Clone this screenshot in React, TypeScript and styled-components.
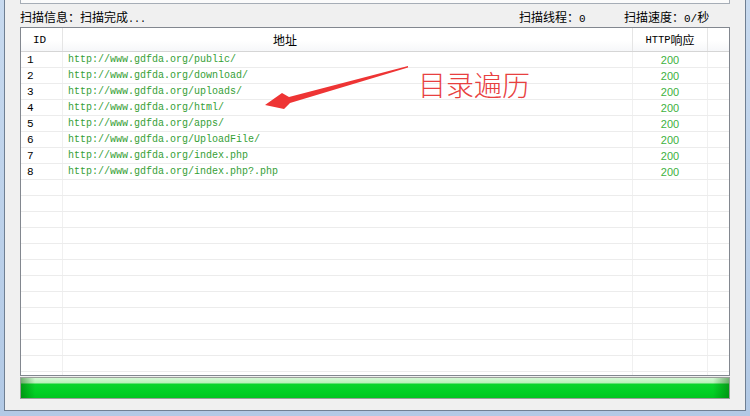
import React from "react";
import styled, { createGlobalStyle } from "styled-components";

const CJK = `"Noto Sans CJK SC", "Liberation Sans", sans-serif`;
const MONO = `"Liberation Mono", "DejaVu Sans Mono", monospace`;

const Global = createGlobalStyle`
  html, body { margin: 0; padding: 0; background: #b9cfe8; }
  #root { width: 750px; height: 416px; overflow: hidden; }
`;

const Frame = styled.div`
  position: relative;
  width: 750px;
  height: 416px;
  box-sizing: border-box;
  padding: 0 4px 5px 4px;
  background: linear-gradient(to bottom, #c8daef, #b2c9e5);
  display: flex;
`;

const Panel = styled.div`
  flex: 1;
  display: flex;
  flex-direction: column;
  background: #f0f0f0;
  border: 1px solid #6f7f92;
  border-top: none;
  padding: 0 15px;
`;

const TopBox = styled.div`
  height: 3px;
  border: 1px solid #a6adb6;
  border-top: none;
  background: #fbfbfb;
`;

const StatusRow = styled.div`
  height: 23px;
  box-sizing: border-box;
  padding-top: 2px;
  display: flex;
  align-items: center;
  font-family: ${CJK};
  font-size: 12px;
  color: #000;
  white-space: nowrap;
`;

const StatusMain = styled.div`
  flex: 1;
`;

const StatusItem = styled.div<{ $w: number }>`
  width: ${(p) => p.$w}px;
`;

const Ascii = styled.span<{ $size?: number }>`
  font-family: ${MONO};
  font-size: ${(p) => p.$size ?? 10}px;
`;

const ListBox = styled.div`
  height: 349px;
  box-sizing: border-box;
  border: 1px solid #82878f;
  background: #fff;
  overflow: hidden;
`;

const COLS = "42px 570px 75px 1fr";

const HeaderRow = styled.div`
  display: grid;
  grid-template-columns: ${COLS};
  height: 24px;
  box-sizing: border-box;
  border-bottom: 1px solid #d5d5d5;
  background: linear-gradient(to bottom, #ffffff 0%, #ffffff 55%, #f6f7f9 100%);
`;

const HeaderCell = styled.div<{ $align: "left" | "center"; $pad?: number }>`
  display: flex;
  align-items: center;
  justify-content: ${(p) => (p.$align === "center" ? "center" : "flex-start")};
  padding-left: ${(p) => p.$pad ?? 0}px;
  border-right: 1px solid #e5e5e5;
  font-family: ${CJK};
  font-size: 12px;
  color: #000;
  white-space: nowrap;
  &:last-child { border-right: none; }
`;

const Row = styled.div`
  display: grid;
  grid-template-columns: ${COLS};
  height: 16px;
  box-sizing: border-box;
  border-bottom: 1px solid #ececec;
`;

const Cell = styled.div<{ $kind: "id" | "url" | "code" | "fill" }>`
  display: flex;
  align-items: center;
  white-space: nowrap;
  overflow: hidden;
  border-right: 1px solid #f0f0f0;
  &:last-child { border-right: none; }
  ${(p) =>
    p.$kind === "id"
      ? `padding-left: 6px; font-family: ${MONO}; font-size: 11px; color: #000;`
      : p.$kind === "url"
      ? `padding-left: 5px; font-family: ${MONO}; font-size: 10px; color: #35a035;`
      : p.$kind === "code"
      ? `justify-content: center; font-family: "Liberation Sans", Arial, sans-serif; font-size: 11px; color: #40b240;`
      : ""}
`;

const Progress = styled.div`
  margin-top: 1px;
  height: 22px;
  box-sizing: border-box;
  border: 1px solid #9a9e9a;
  background:
    linear-gradient(to right, rgba(0, 90, 0, 0.45) 0px, rgba(0, 90, 0, 0) 14px, rgba(0, 90, 0, 0) calc(100% - 16px), rgba(0, 90, 0, 0.45) 100%),
    linear-gradient(to bottom, #d4f8d4 0px, #b9f0b9 5px, #0ad42c 6px, #00d024 70%, #00c620 100%);
`;

const Overlay = styled.svg`
  position: absolute;
  left: 0;
  top: 0;
  pointer-events: none;
`;

const Annotation = styled.div`
  position: absolute;
  left: 418px;
  top: 67px;
  font-family: ${CJK};
  font-size: 28px;
  font-weight: 300;
  line-height: 34px;
  color: #e84040;
  white-space: nowrap;
`;

const urls = [
  "http://www.gdfda.org/public/",
  "http://www.gdfda.org/download/",
  "http://www.gdfda.org/uploads/",
  "http://www.gdfda.org/html/",
  "http://www.gdfda.org/apps/",
  "http://www.gdfda.org/UploadFile/",
  "http://www.gdfda.org/index.php",
  "http://www.gdfda.org/index.php?.php",
];

const TOTAL_ROWS = 21;

export default function App() {
  const rows = Array.from({ length: TOTAL_ROWS }, (_, i) => urls[i] ?? null);
  return (
    <>
      <Global />
      <Frame>
        <Panel>
          <TopBox />
          <StatusRow>
            <StatusMain>
              扫描信息：扫描完成<Ascii>...</Ascii>
            </StatusMain>
            <StatusItem $w={105}>
              扫描线程：<Ascii $size={11}>0</Ascii>
            </StatusItem>
            <StatusItem $w={106}>
              扫描速度：<Ascii $size={11}>0/</Ascii>秒
            </StatusItem>
          </StatusRow>
          <ListBox>
            <HeaderRow>
              <HeaderCell $align="left" $pad={12}>
                <Ascii $size={11}>ID</Ascii>
              </HeaderCell>
              <HeaderCell $align="left" $pad={210}>
                地址
              </HeaderCell>
              <HeaderCell $align="center">
                <Ascii $size={10.5}>HTTP</Ascii>响应
              </HeaderCell>
              <HeaderCell $align="center" />
            </HeaderRow>
            {rows.map((u, i) => (
              <Row key={i}>
                <Cell $kind="id">{u ? i + 1 : ""}</Cell>
                <Cell $kind="url">{u ?? ""}</Cell>
                <Cell $kind="code">{u ? "200" : ""}</Cell>
                <Cell $kind="fill" />
              </Row>
            ))}
          </ListBox>
          <Progress />
        </Panel>
        <Overlay width="750" height="416" viewBox="0 0 750 416">
          <polygon
            points="408,66 289,97 282,93 265,105 284,109 290,103 408,67.5"
            fill="#ee3434"
          />
        </Overlay>
        <Annotation>目录遍历</Annotation>
      </Frame>
    </>
  );
}
